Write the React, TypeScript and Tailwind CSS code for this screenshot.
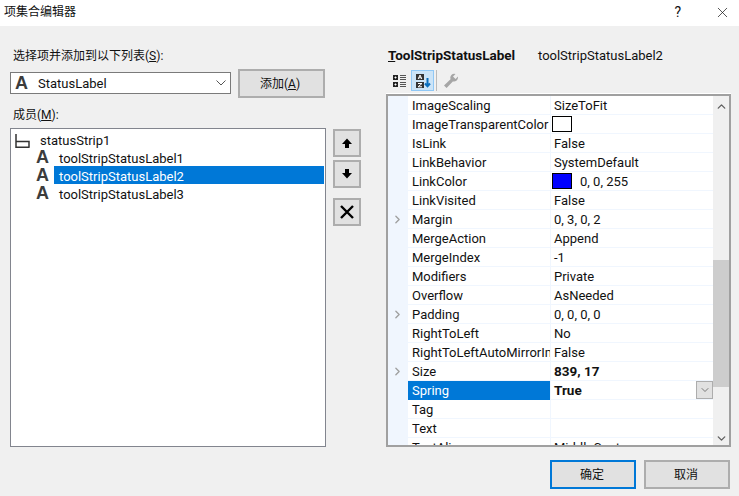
import { ChevronDown, ChevronRight, ChevronUp, X } from "lucide-react";

const font = { fontFamily: 'Roboto, "Noto Sans CJK SC", sans-serif' };

type Row = { name: string; value?: string; bold?: boolean; expand?: boolean; swatch?: string; selected?: boolean };

const rows: Row[] = [
  { name: "ImageScaling", value: "SizeToFit" },
  { name: "ImageTransparentColor", swatch: "#ffffff" },
  { name: "IsLink", value: "False" },
  { name: "LinkBehavior", value: "SystemDefault" },
  { name: "LinkColor", value: "0, 0, 255", swatch: "#0000ff" },
  { name: "LinkVisited", value: "False" },
  { name: "Margin", value: "0, 3, 0, 2", expand: true },
  { name: "MergeAction", value: "Append" },
  { name: "MergeIndex", value: "-1" },
  { name: "Modifiers", value: "Private" },
  { name: "Overflow", value: "AsNeeded" },
  { name: "Padding", value: "0, 0, 0, 0", expand: true },
  { name: "RightToLeft", value: "No" },
  { name: "RightToLeftAutoMirrorImage", value: "False" },
  { name: "Size", value: "839, 17", bold: true, expand: true },
  { name: "Spring", value: "True", bold: true, selected: true },
  { name: "Tag" },
  { name: "Text" },
  { name: "TextAlign", value: "MiddleCenter" },
];

function GlyphA() {
  return <span className="h-[18px] w-[17px] overflow-hidden text-center font-['Liberation_Sans'] text-[18px] leading-[18px] font-bold text-[#3c3c3c]">A</span>;
}

function WinButton({ children, primary, className = "" }: { children: React.ReactNode; primary?: boolean; className?: string }) {
  return (
    <button
      className={`flex items-center justify-center border-2 bg-[#e1e1e1] text-[12px] text-[#111] ${
        primary ? "border-[#0078d7]" : "border-[#adadad]"
      } ${className}`}
    >
      {children}
    </button>
  );
}

function ArrowIcon({ down }: { down?: boolean }) {
  return (
    <svg width="12" height="12" viewBox="0 0 12 12" className={down ? "rotate-180" : ""}>
      <path d="M6 1.5 11 7H8v4H4V7H1z" fill="#000" />
    </svg>
  );
}

function GridRow({ row }: { row: Row }) {
  return (
    <div className="flex h-[19px] shrink-0 text-[13px] leading-[19px] text-[#111]">
      <div className="flex w-[20px] shrink-0 items-center justify-center bg-[#f0f6fe] pr-[2px] text-[#a0a0a0]">
        {row.expand && <ChevronRight size={13} strokeWidth={2.5} />}
      </div>
      <div
        className={`w-[142px] shrink-0 overflow-hidden border-b pl-1 whitespace-nowrap ${
          row.selected ? "border-[#0078d7] bg-[#0078d7] text-white" : "border-[#f0f6fe]"
        }`}
      >
        {row.name}
      </div>
      <div className={`relative flex min-w-0 flex-1 items-start border-b border-l border-[#f0f6fe] whitespace-nowrap ${row.swatch ? "pl-px" : "pl-[3px]"}`}>
        {row.swatch && <span className="mt-px mr-2 h-4 w-5 shrink-0 border border-black" style={{ background: row.swatch }} />}
        <span className={row.bold ? "text-[13.5px] font-bold" : ""}>{row.value}</span>
        {row.selected && (
          <span className="absolute top-0 right-0 flex h-[18px] w-[17px] items-center justify-center border border-[#adadad] bg-[#e1e1e1] text-[#555]">
            <ChevronDown size={12} strokeWidth={1.5} />
          </span>
        )}
      </div>
    </div>
  );
}

function Toolbar() {
  return (
    <div className="mt-[5px] ml-[6px] flex h-[21px] items-center">
      <svg width="16" height="16" viewBox="0 0 16 16" className="mr-[3px]">
        <path d="M1 2h5v5H1zM1 9h5v5H1z" fill="#222" />
        <path d="M2.5 4.5h2M3.5 3.5v2M2.5 11.5h2M3.5 10.5v2" stroke="#fff" />
        <path d="M8 2.5h6M8 4.5h6M8 6.5h6M8 9.5h6M8 11.5h6M8 13.5h6" stroke="#555" />
      </svg>
      <span className="flex h-[21px] w-[23px] items-center justify-center border border-[#90c8f6] bg-[#cce4f7]">
        <svg width="16" height="16" viewBox="0 0 16 16">
          <path d="M1 1h8v6H1zM1 9h8v6H1z" fill="#333" />
          <path d="M3.2 6 5 2l1.8 4M3.8 4.8h2.4M3 10.5h4L3 13.8h4" stroke="#fff" fill="none" />
          <path d="M12.5 5v8M10 10.5l2.5 2.8 2.5-2.8" stroke="#0a6ebd" strokeWidth="2" fill="none" />
        </svg>
      </span>
      <span className="mx-[2px] h-[21px] w-px bg-[#bbb]" />
      <svg width="16" height="16" viewBox="0 0 16 16" className="ml-1">
        <path d="M15 4.5a4 4 0 0 1-5.2 3.9L3.6 15 1 12.5l6.5-6.3A4 4 0 0 1 12.5 1L10 3.5 12.5 6 15 3.5z" fill="#a6a6a6" />
      </svg>
    </div>
  );
}

export default function App() {
  return (
    <div className="flex h-[496px] w-[739px] flex-col overflow-hidden bg-[#f0f0f0]" style={font}>
      <div className="flex h-[26px] shrink-0 items-center justify-between bg-white pr-2 pb-[2px] pl-1 text-[12px] text-[#111]">
        <span>项集合编辑器</span>
        <div className="flex items-center gap-[33px]">
          <span className="text-[14px]">?</span>
          <X size={17} strokeWidth={1} />
        </div>
      </div>

      <div className="flex min-h-0 flex-1 pt-5 pl-[10px]">
        <div className="w-[316px] shrink-0 text-[13px] text-[#111]">
          <div className="h-[26px] pl-[3px] text-[12px] leading-[20px]">
            选择项并添加到以下列表(<u>S</u>):
          </div>
          <div className="flex items-start">
            <div className="flex h-[22px] w-[221px] items-center border border-[#7a7a7a] bg-white pr-1 pl-[2px]">
              <GlyphA />
              <span className="ml-[8px] flex-1 pt-[2px]">StatusLabel</span>
              <svg width="10" height="6" viewBox="0 0 10 6">
                <path d="M.5.5 5 5 9.500.5" stroke="#555" fill="none" />
              </svg>
            </div>
            <WinButton className="-mt-[3px] ml-[7px] h-[29px] w-[87px] pr-[3px]">
              <span>
                添加(<u>A</u>)
              </span>
            </WinButton>
          </div>
          <div className="mt-[7px] h-[23px] pl-[3px] text-[12px] leading-[20px]">
            成员(<u>M</u>):
          </div>
          <div className="h-[319px] border border-[#82858e] bg-white pt-1 pr-[1px] pl-1">
            <div className="flex h-[15px] items-center">
              <svg width="15" height="14" viewBox="0 0 15 14">
                <path d="M1 0v13.300h13.500M1 7.500h13v6" stroke="#333" strokeWidth="1.500" fill="none" />
              </svg>
              <span className="ml-[10px]">statusStrip1</span>
            </div>
            {["toolStripStatusLabel1", "toolStripStatusLabel2", "toolStripStatusLabel3"].map((name, i) => (
              <div key={name} className="ml-[19px] flex h-[18px] items-center">
                <GlyphA />
                <span className={`ml-[3px] flex h-[18px] flex-1 items-center pt-1 pl-[5px] ${i === 1 ? "bg-[#0078d7] text-white" : ""}`}>
                  {name}
                </span>
              </div>
            ))}
          </div>
        </div>

        <div className="mt-[83px] ml-[7px] flex w-[28px] shrink-0 flex-col">
          <WinButton className="h-[28px]">
            <ArrowIcon />
          </WinButton>
          <WinButton className="mt-[3px] h-[28px]">
            <ArrowIcon down />
          </WinButton>
          <WinButton className="mt-[10px] h-[28px]">
            <svg width="16" height="16" viewBox="0 0 16 16">
              <path d="M2 2l12 12M14 2 2 14" stroke="#000" strokeWidth="2.400" />
            </svg>
          </WinButton>
        </div>

        <div className="ml-[25px] flex w-[345px] shrink-0 flex-col">
          <div className="flex h-[19px] items-center pl-[2px] text-[13px] text-[#111]">
            <span className="w-[150px] text-[13.5px] font-bold">
              <u>T</u>oolStripStatusLabel
            </span>
            <span>toolStripStatusLabel2</span>
          </div>
          <Toolbar />
          <div className="mt-[2px] h-px bg-white" />
          <div className="flex h-[353px] border-2 border-[#a0a0a0] bg-white">
            <div className="flex min-w-0 flex-1 flex-col overflow-hidden">
              {rows.map((row) => (
                <GridRow key={row.name} row={row} />
              ))}
            </div>
            <div className="flex w-[16px] shrink-0 flex-col items-center bg-[#f0f0f0] text-[#606060]">
              <ChevronUp size={13} strokeWidth={2.5} className="mt-1" />
              <div className="mt-[147px] h-[127px] w-full bg-[#cdcdcd]" />
              <ChevronDown size={13} strokeWidth={2.5} className="mt-[45px]" />
            </div>
          </div>
          <div className="mt-[13px] flex justify-end pr-px">
            <WinButton primary className="h-[29px] w-[86px] pr-[2px]">确定</WinButton>
            <WinButton className="ml-2 h-[29px] w-[86px] pr-[2px]">取消</WinButton>
          </div>
        </div>
      </div>
    </div>
  );
}
